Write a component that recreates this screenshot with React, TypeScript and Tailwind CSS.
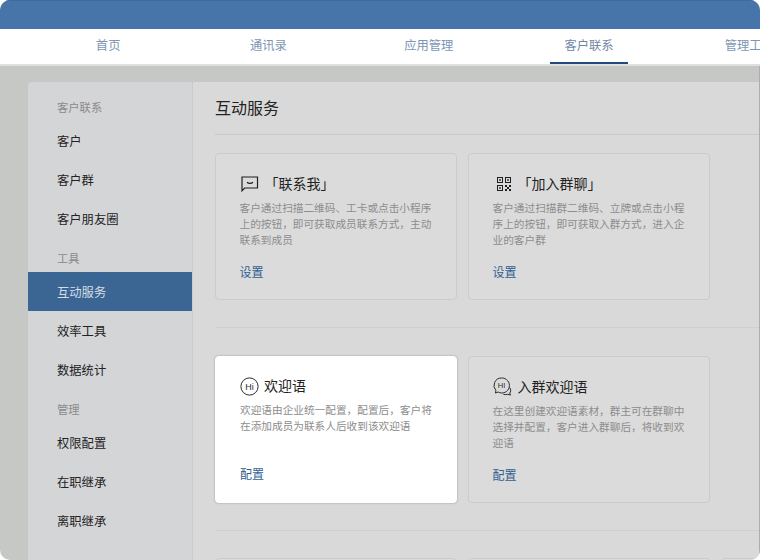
const font = { fontFamily: '"Liberation Sans", "Noto Sans CJK SC", sans-serif' };

const tabs = ['首页', '通讯录', '应用管理', '客户联系', '管理工具'];

type NavItem = { label: string; kind?: 'head' | 'active' };

const nav: NavItem[] = [
    { label: '客户联系', kind: 'head' },
    { label: '客户' },
    { label: '客户群' },
    { label: '客户朋友圈' },
    { label: '工具', kind: 'head' },
    { label: '互动服务', kind: 'active' },
    { label: '效率工具' },
    { label: '数据统计' },
    { label: '管理', kind: 'head' },
    { label: '权限配置' },
    { label: '在职继承' },
    { label: '离职继承' },
];

function ContactIcon() {
    return (
        <svg className="ml-[1px]" width="18" height="16" viewBox="0 0 18 16" fill="none" stroke="#1f1f1f" strokeWidth="1.2">
            <path d="M1 1h15.5v11H3.6L1 14.8z" />
            <path d="M6 6.2c1.6 1.5 4.4 1.5 6 0" />
        </svg>
    );
}

function QrIcon() {
    return (
        <svg className="ml-[3px]" width="16" height="16" viewBox="0 0 16 16" fill="#1f1f1f">
            <path fillRule="evenodd" d="M1 1h6v6H1zM2 2v4h4V2zM9 1h6v6H9zM10 2v4h4V2zM1 9h6v6H1zM2 10v4h4v-4z" />
            <rect x="3.2" y="3.2" width="1.6" height="1.6" />
            <rect x="11.2" y="3.2" width="1.6" height="1.6" />
            <rect x="3.2" y="11.2" width="1.6" height="1.6" />
            <rect x="9" y="9" width="2" height="2" />
            <rect x="13" y="9" width="2" height="2" />
            <rect x="11" y="11" width="2" height="2" />
            <rect x="9" y="13" width="2" height="2" />
            <rect x="13" y="13" width="2" height="2" />
        </svg>
    );
}

function HiIcon() {
    return (
        <svg width="19" height="19" viewBox="0 0 19 19" fill="none">
            <circle cx="9.5" cy="9.5" r="8.6" stroke="#2b2b2b" strokeWidth="1" />
            <text x="9.5" y="12.6" textAnchor="middle" fontSize="9" fill="#2b2b2b" style={font}>Hi</text>
        </svg>
    );
}

function GroupHiIcon() {
    return (
        <svg className="-mt-[1px]" width="20" height="19" viewBox="0 0 20 19" fill="none">
            <path d="M8.5 1a7.5 7.5 0 0 0-5.6 12.5L2.4 16l2.8-1a7.5 7.5 0 1 0 3.3-14z" stroke="#2b2b2b" strokeWidth="1" />
            <path d="M16.6 10.5c1.6 2.2 1.4 4.4 0 5.6l1 1.9-3.4-.7c-1.2.5-2.6.5-3.8 0" stroke="#2b2b2b" strokeWidth="1" />
            <text x="8.5" y="11.2" textAnchor="middle" fontSize="7.5" fill="#2b2b2b" style={font}>HI</text>
        </svg>
    );
}

type Card = { icon?: React.ReactNode; title?: string; desc?: string; link?: string; white?: boolean };

function ServiceCard({ card }: { card: Card }) {
    return (
        <div className={`w-[242px] h-[147px] shrink-0 rounded-[4px] pr-[23px] pt-[21px] ${card.white ? 'bg-white shadow-[0_0_2px_rgba(0,0,0,0.35)] pl-[25px]' : 'bg-[#dbdbdb] border border-[#cbcbcb] pl-[23.5px]'}`}>
            <div className="flex items-center h-[18px]">
                <div className={`shrink-0 flex ${card.white ? 'w-[24px]' : 'w-[25px]'}`}>{card.icon}</div>
                <div className="text-[14px] leading-[18px] text-[#222] whitespace-nowrap">{card.title}</div>
            </div>
            <div className="mt-[6.5px] h-[49px] text-[10.67px] leading-[16.3px] text-[#8d8d8d]">{card.desc}</div>
            <div className="mt-[15.5px] text-[12px] leading-[18px] text-[#2f6190]">{card.link}</div>
        </div>
    );
}

export default function App() {
    return (
        <div className="w-[760px] h-[560px] bg-white overflow-hidden" style={font}>
            <div className="h-full rounded-[10px] overflow-hidden bg-[#c6c8c6] flex flex-col">
                <div className="h-[29px] shrink-0 bg-[#4775aa] border-t border-[#3f6a9e]" />
                <div className="h-[37px] shrink-0 bg-white border-b-2 border-[#e0e0e0] flex pl-[28px] overflow-hidden">
                    {tabs.map((t, i) => (
                        <div key={t} className="w-[160.3px] shrink-0 flex justify-center">
                            <div className={`h-[35px] leading-[35px] px-[14.5px] text-[12.3px] whitespace-nowrap ${i === 3 ? 'text-[#6f87a6] border-b-[2px] border-[#23497f]' : 'text-[#7d96b5]'}`}>{t}</div>
                        </div>
                    ))}
                </div>
                <div className="flex-1 min-h-0 pt-[16px] pl-[28px] border-r border-[#adadad]">
                    <div className="h-full flex rounded-tl-[4px] overflow-hidden">
                        <div className="w-[165px] shrink-0 bg-[#d4d5d7] border-r border-dotted border-[#c2c2c2] pt-[5px]">
                            {nav.map((n) =>
                                n.kind === 'head' ? (
                                    <div key={n.label} className="h-[34px] pt-[12px] pl-[29px] text-[11.3px] leading-[18px] text-[#8b8b8b]">{n.label}</div>
                                ) : (
                                    <div key={n.label} className={`h-[39px] pt-[2px] pl-[29px] text-[12.3px] leading-[39px] ${n.kind === 'active' ? 'bg-[#3b6593] text-[#d5dde6]' : 'text-[#222]'}`}>{n.label}</div>
                                )
                            )}
                        </div>
                        <div className="flex-1 min-w-0 bg-[#d9d9d9] pl-[22px] overflow-hidden">
                            <div className="h-[53px] border-b border-[#c3cad0] text-[16px] leading-[54px] text-[#222]">互动服务</div>
                            <div className="pt-[18px] pb-[27px] border-b border-[#cfcfcf] flex gap-[11px]">
                                <ServiceCard card={{ icon: <ContactIcon />, title: '「联系我」', desc: '客户通过扫描二维码、工卡或点击小程序上的按钮，即可获取成员联系方式，主动联系到成员', link: '设置' }} />
                                <ServiceCard card={{ icon: <QrIcon />, title: '「加入群聊」', desc: '客户通过扫描群二维码、立牌或点击小程序上的按钮，即可获取入群方式，进入企业的客户群', link: '设置' }} />
                            </div>
                            <div className="pt-[28px] pb-[27px] border-b border-[#cfcfcf] flex gap-[11px]">
                                <ServiceCard card={{ icon: <HiIcon />, title: '欢迎语', desc: '欢迎语由企业统一配置，配置后，客户将在添加成员为联系人后收到该欢迎语', link: '配置', white: true }} />
                                <ServiceCard card={{ icon: <GroupHiIcon />, title: '入群欢迎语', desc: '在这里创建欢迎语素材，群主可在群聊中选择并配置，客户进入群聊后，将收到欢迎语', link: '配置' }} />
                            </div>
                            <div className="pt-[27px] flex gap-[11px]">
                                <ServiceCard card={{}} />
                                <ServiceCard card={{}} />
                                <ServiceCard card={{}} />
                            </div>
                        </div>
                    </div>
                </div>
            </div>
        </div>
    );
}
